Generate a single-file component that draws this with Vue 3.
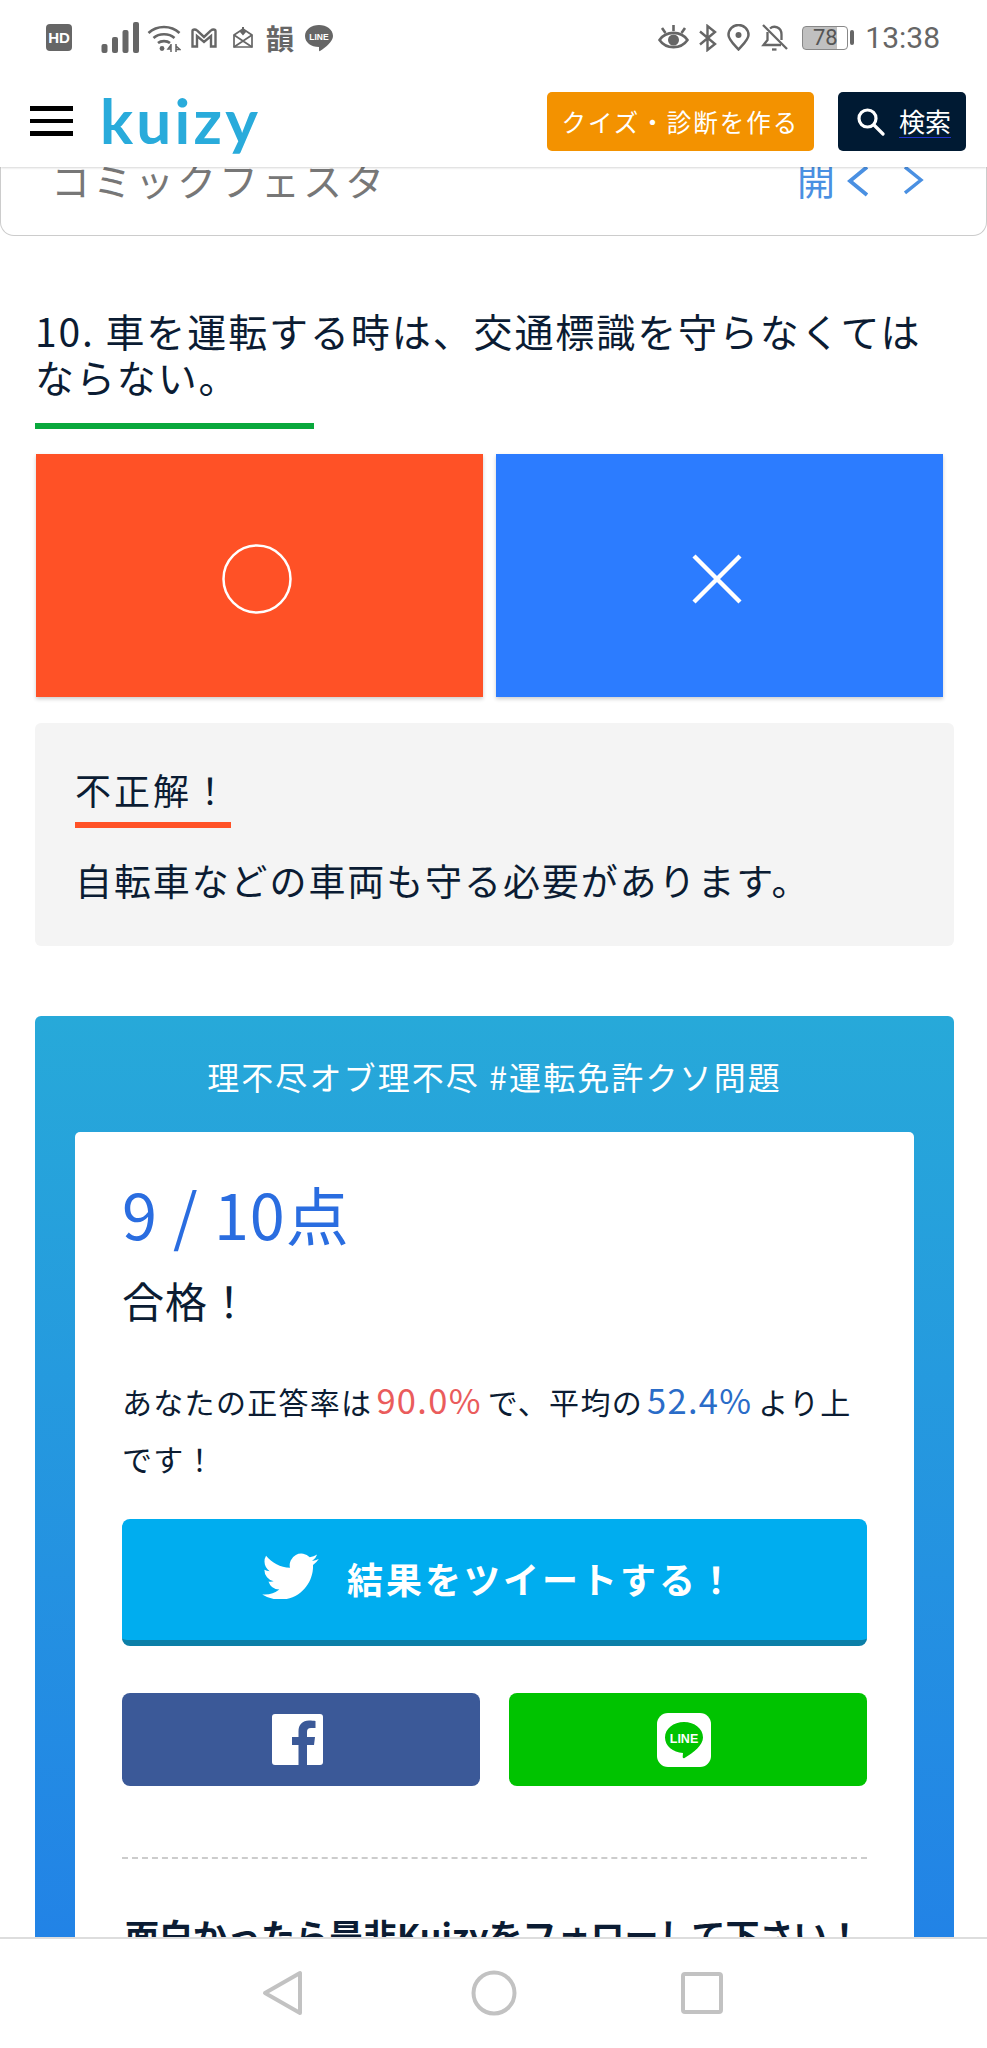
<template>
	<div class="phone">
		<!-- ステータスバー -->
		<div class="status">
			<div class="status-left">
				<span class="hd">HD</span>
				<svg class="st-signal" width="38" height="31" viewBox="0 0 38 31" fill="#666">
					<rect x="0.5" y="22" width="6" height="9" rx="2" />
					<rect x="11" y="15" width="6" height="16" rx="2" />
					<rect x="21.5" y="8" width="6" height="23" rx="2" />
					<rect x="32" y="0" width="6" height="31" rx="2" />
				</svg>
				<svg class="st-wifi" width="34" height="28" viewBox="0 0 34 28" fill="none" stroke="#666" stroke-width="2.6">
					<path d="M1.5 9 C10 1 24 1 32.5 9" />
					<path d="M6.5 14 C12 9 22 9 27.5 14" />
					<path d="M11 19 C14 16.5 20 16.5 23 19" />
					<circle cx="15" cy="24.5" r="2.4" fill="#666" stroke="none" />
					<path d="M24 21 L21 25 L24 25 M24 20 V28 M29 20 V28 M29 22 L33 25.500 H29" stroke-width="1.5" />
				</svg>
				<svg class="st-m" width="26" height="20" viewBox="0 0 26 20" fill="none" stroke="#666" stroke-width="2.4">
					<path d="M1.500 18.500 V3 Q1.500 1.500 3.500 1.500 Q5 1.500 6 2.500 L13 9 L20 2.500 Q21 1.500 22.500 1.500 Q24.500 1.500 24.500 3 V18.500 H20 V8 L13 14 L6 8 V18.500 Z" />
				</svg>
				<svg class="st-mail" width="22" height="22" viewBox="0 0 22 22" fill="none" stroke="#666" stroke-width="1.700">
					<path d="M2 8 L11 2 L20 8 V20 H2 Z" />
					<path d="M2 8 L20 20 M20 8 L2 20" />
					<path d="M11 0 V6 M8.500 4 L11 7 L13.500 4" stroke-width="2" />
				</svg>
				<span class="st-kanji">韻</span>
				<svg class="st-line" width="28" height="28" viewBox="0 0 28 28">
					<path d="M14 1 C21.500 1 28 5.500 28 12 C28 17.500 21 23 15 27 C14.500 27.500 14 27 14 26 V23 C6 23 0 18.500 0 12 C0 5.500 6.500 1 14 1 Z" fill="#666" />
					<text x="14" y="15.500" text-anchor="middle" font-size="8.500" font-weight="700" fill="#fff" font-family="Liberation Sans, sans-serif">LINE</text>
				</svg>
			</div>
			<div class="status-right">
				<svg class="st-eye" width="31" height="27" viewBox="0 0 31 27" fill="none" stroke="#666" stroke-width="2.600">
					<path d="M1.500 16 C8 6.500 23 6.500 29.500 16 C23 25.500 8 25.500 1.500 16 Z" />
					<circle cx="15.500" cy="16" r="5.500" fill="#666" stroke="none" />
					<path d="M15.500 1 V7 M4 4 L7.500 9 M27 4 L23.500 9" />
				</svg>
				<svg class="st-bt" width="20" height="28" viewBox="0 0 20 28" fill="none" stroke="#666" stroke-width="2.400">
					<path d="M2 7.500 L17 20 L9.500 26 V2 L17 8 L2 20.500" />
				</svg>
				<svg class="st-pin" width="23" height="27" viewBox="0 0 23 27" fill="none" stroke="#666" stroke-width="2.500">
					<path d="M11.500 25.500 C6 19.500 1.500 15.500 1.500 11 A10 10 0 0 1 21.500 11 C21.500 15.500 17 19.500 11.500 25.500 Z" />
					<circle cx="11.500" cy="11" r="3" fill="#666" stroke="none" />
				</svg>
				<svg class="st-bell" width="27" height="28" viewBox="0 0 27 28" fill="none" stroke="#666" stroke-width="2.300">
					<path d="M2 1 L26 25" />
					<path d="M6.500 8 V16 L2.500 21 H20" />
					<path d="M9 4.500 C13 1 20.500 3 20.500 10.500 V16" />
					<path d="M11 25.500 H15.500" />
				</svg>
				<div class="battery"><span>{{ battery }}</span></div>
				<span class="battery-nub"></span>
				<span class="time">13:38</span>
			</div>
		</div>

		<!-- ヘッダー -->
		<header class="header">
			<div class="burger"><i></i><i></i><i></i></div>
			<span class="logo">kuizy</span>
			<a class="btn-make">クイズ・診断を作る</a>
			<a class="btn-search">
				<svg width="29" height="29" viewBox="0 0 29 29" fill="none" stroke="#fff" stroke-width="3.200">
					<circle cx="11.500" cy="11.500" r="8.500" />
					<path d="M18 18 L27 27" stroke-linecap="round" />
				</svg>
				<span>検索</span>
			</a>
		</header>

		<!-- スクロール領域 -->
		<main class="content">
			<div class="toc">
				<span class="toc-title">コミックフェスタ</span>
				<span class="toc-open">開</span>
				<svg width="22" height="30" viewBox="0 0 22 30" fill="none" stroke="#4a90e2" stroke-width="3.800"><path d="M21 0 L4 14 L21 28" /></svg>
				<svg class="toc-next" width="20" height="30" viewBox="0 0 20 30" fill="none" stroke="#4a90e2" stroke-width="3.400"><path d="M1 0 L17 13 L1 26" /></svg>
			</div>

			<section class="question">
				<h2 class="q-title">10. 車を運転する時は、交通標識を守らなくてはならない。</h2>
				<div class="q-bar"></div>
				<div class="answers">
					<button class="answer red">
						<svg width="70" height="70" viewBox="0 0 70 70" fill="none" stroke="#fff" stroke-width="2.500"><circle cx="35" cy="35" r="33.500" /></svg>
					</button>
					<button class="answer blue">
						<svg width="50" height="50" viewBox="0 0 50 50" fill="none" stroke="#fff" stroke-width="4.400"><path d="M2 2 L48 48 M48 2 L2 48" /></svg>
					</button>
				</div>
				<div class="feedback">
					<div class="fb-head"><span>不正解！</span></div>
					<p class="fb-text">自転車などの車両も守る必要があります。</p>
				</div>
			</section>

			<section class="result">
				<p class="r-title">理不尽オブ理不尽 #運転免許クソ問題</p>
				<div class="r-card">
					<p class="score">9 / 10点</p>
					<p class="pass">合格！</p>
					<p class="rate">あなたの正答率は<em class="own">90.0%</em>で、平均の<em class="avg">52.4%</em>より上です！</p>
					<a class="tweet">
						<svg width="57" height="46" viewBox="0 0 24 19.500" fill="#fff">
							<path d="M23.953 2.57a10 10 0 01-2.825.775 4.958 4.958 0 002.163-2.723c-.951.555-2.005.959-3.127 1.184a4.92 4.92 0 00-8.384 4.482C7.69 6.095 4.067 4.13 1.64 1.162a4.822 4.822 0 00-.666 2.475c0 1.71.87 3.213 2.188 4.096a4.904 4.904 0 01-2.228-.616v.06a4.923 4.923 0 003.946 4.827 4.996 4.996 0 01-2.212.085 4.936 4.936 0 004.604 3.417 9.867 9.867 0 01-6.102 2.105c-.39 0-.779-.023-1.17-.067a13.995 13.995 0 007.557 2.209c9.053 0 13.998-7.496 13.998-13.985 0-.21 0-.42-.015-.63A9.935 9.935 0 0024 2.590z" />
						</svg>
						<span>結果をツイートする！</span>
					</a>
					<div class="share">
						<a class="share-btn fb">
							<svg width="51" height="51" viewBox="0 0 51 51">
								<rect width="51" height="51" rx="3" fill="#fff" />
								<path d="M35 51 V31 H42 L43 23 H35 V18 C35 15.500 36 14 39 14 H43.500 V7 C42 6.800 39.500 6.500 37 6.500 C30.500 6.500 26.500 10.500 26.500 17.500 V23 H20 V31 H26.500 V51 Z" fill="#3b5998" />
							</svg>
						</a>
						<a class="share-btn line">
							<svg width="54" height="54" viewBox="0 0 54 54">
								<rect width="54" height="54" rx="11" fill="#fff" />
								<path d="M27 9 C37.500 9 46 15.500 46 24.500 C46 32 37 39.500 27.500 45 C26.500 45.500 25.500 45 25.700 43.500 L26 40 C16 39.500 8 33 8 24.500 C8 15.500 16.500 9 27 9 Z" fill="#00c300" />
								<text x="27" y="30" text-anchor="middle" font-size="12.500" font-weight="700" fill="#fff" font-family="Liberation Sans, sans-serif">LINE</text>
							</svg>
						</a>
					</div>
					<div class="dashed"></div>
					<p class="follow">面白かったら是非Kuizyをフォローして下さい！</p>
				</div>
			</section>
		</main>

		<!-- ナビゲーションバー -->
		<nav class="navbar">
			<svg width="42" height="46" viewBox="0 0 42 46" fill="none" stroke="#c2c2c2" stroke-width="4" stroke-linejoin="round"><path d="M38 3 V43 L3 23 Z" /></svg>
			<svg width="46" height="46" viewBox="0 0 46 46" fill="none" stroke="#c2c2c2" stroke-width="4"><circle cx="23" cy="23" r="20.500" /></svg>
			<svg class="nav-square" width="42" height="42" viewBox="0 0 42 42" fill="none" stroke="#c2c2c2" stroke-width="4" stroke-linejoin="round"><rect x="2" y="2" width="38" height="38" rx="2" /></svg>
		</nav>
	</div>
</template>

<script setup>
const battery = 78
</script>

<style>
html, body {
	margin: 0;
	background: #fff;
}
</style>

<style scoped>
.phone {
	width: 987px;
	height: 2048px;
	display: flex;
	flex-direction: column;
	overflow: hidden;
	background: #fff;
	color: #0b1c33;
	font-family: "Noto Sans CJK JP", "Noto Sans", sans-serif;
}

/* ステータスバー */
.status {
	height: 75px;
	flex: none;
	display: flex;
	justify-content: space-between;
	align-items: center;
	padding: 0 47px 0 46px;
}
.status-left, .status-right {
	display: flex;
	align-items: center;
	height: 40px;
}
.hd {
	width: 26px;
	height: 27px;
	border-radius: 4px;
	background: #666;
	color: #fff;
	font: 700 15px/27px "Liberation Sans", sans-serif;
	text-align: center;
}
.st-signal { margin-left: 29px; }
.st-wifi { margin-left: 8px; }
.st-m { margin-left: 10px; }
.st-mail { margin-left: 15px; }
.st-kanji {
	margin-left: 12px;
	color: #666;
	font-size: 28px;
	line-height: 30px;
	font-weight: 700;
}
.st-line { margin-left: 11px; }
.st-eye { margin-right: 9px; }
.st-bt { margin-right: 9px; }
.st-pin { margin-right: 11px; }
.st-bell { margin-right: 14px; }
.battery {
	width: 46px;
	height: 24px;
	box-sizing: border-box;
	border: 1.5px solid #888;
	border-radius: 4px;
	background: linear-gradient(90deg, #c0c0c0 78%, #fff 78%);
	color: #555;
	font: 22px/21px Roboto, sans-serif;
	text-align: center;
}
.battery-nub {
	width: 4px;
	height: 15px;
	margin-left: 2px;
	border-radius: 2px;
	background: #666;
}
.time {
	margin-left: 11px;
	color: #666;
	font: 30px/40px Roboto, sans-serif;
}

/* ヘッダー */
.header {
	position: relative;
	z-index: 2;
	height: 92px;
	flex: none;
	display: flex;
	align-items: center;
	padding: 0 21px 0 30px;
	background: #fff;
	box-shadow: 0 2px 2px -1px rgba(0, 0, 0, 0.16);
}
.burger {
	width: 43px;
	display: flex;
	flex-direction: column;
	gap: 8px;
}
.burger i {
	height: 4.500px;
	background: #000;
}
.logo {
	margin-left: 27px;
	margin-top: -2px;
	color: #29abdb;
	font: 700 62px/70px Lato, sans-serif;
	letter-spacing: 3.200px;
}
.btn-make {
	margin-left: auto;
	width: 267px;
	height: 59px;
	border-radius: 5px;
	background: #f39200;
	color: #fff;
	font-size: 24.500px;
	line-height: 59px;
	letter-spacing: 2px;
	text-align: center;
}
.btn-search {
	margin-left: 24px;
	width: 128px;
	height: 59px;
	box-sizing: border-box;
	padding-left: 18px;
	display: flex;
	align-items: center;
	gap: 14px;
	border-radius: 5px;
	background: #001a33;
	color: #fff;
	font-size: 26px;
}
.btn-search span {
	line-height: 32px;
	border-bottom: 1px solid #2233cc;
}

/* 本文 */
.content {
	flex: 1;
	min-height: 0;
	overflow: hidden;
}
.toc {
	height: 69px;
	box-sizing: border-box;
	display: flex;
	align-items: flex-start;
	padding: 0 62px 0 50px;
	overflow: hidden;
	border: 1.500px solid #ccc;
	border-top: 0;
	border-radius: 0 0 14px 14px;
}
.toc-title {
	margin-top: -12px;
	color: #777;
	font-size: 39px;
	line-height: 48px;
	letter-spacing: 3px;
}
.toc-open {
	margin-left: auto;
	margin-top: -12px;
	color: #4a90e2;
	font-size: 38px;
	line-height: 48px;
}
.toc svg {
	margin-left: 11px;
}
.toc svg.toc-next {
	margin-left: 36px;
}

.question {
	padding: 0 33px 0 35px;
}
.q-title {
	margin: 71px 0 0;
	font-size: 39px;
	line-height: 46px;
	font-weight: 400;
	letter-spacing: 1.900px;
	padding-right: 20px;
}
.q-bar {
	width: 279px;
	height: 6px;
	margin-top: 24px;
	background: #09a83c;
}
.answers {
	display: flex;
	gap: 13px;
	margin-top: 25px;
	padding: 0 11px 0 1px;
}
.answer {
	flex: 1;
	height: 243px;
	padding: 6px 5px 0 0;
	border: 0;
	display: flex;
	align-items: center;
	justify-content: center;
	box-shadow: 0 2px 4px rgba(0, 0, 0, 0.2);
}
.answer.red { background: #ff5126; }
.answer.blue { background: #2c7cff; }
.feedback {
	margin-top: 26px;
	height: 223px;
	box-sizing: border-box;
	padding: 40px 40px 0;
	border-radius: 6px;
	background: #f4f4f4;
}
.fb-head span {
	display: inline-block;
	border-bottom: 6px solid #ff5126;
	padding-bottom: 7px;
	font-size: 36px;
	line-height: 52px;
	letter-spacing: 3px;
}
.fb-text {
	margin: 26px 0 0;
	font-size: 37px;
	line-height: 52px;
	letter-spacing: 1.900px;
}

.result {
	margin: 70px 33px 0 35px;
	padding: 0 40px;
	border-radius: 6px 6px 0 0;
	background: linear-gradient(180deg, #27a9d9 0, #2283e6 920px);
}
.r-title {
	margin: 0;
	height: 116px;
	color: #fff;
	font-size: 32px;
	line-height: 120px;
	letter-spacing: 2.100px;
	text-align: center;
}
.r-card {
	padding: 36px 47px 60px;
	border-radius: 5px 5px 0 0;
	background: #fff;
}
.score {
	margin: 0;
	color: #2a6de0;
	font-size: 63px;
	line-height: 90px;
	letter-spacing: 1px;
}
.pass {
	margin: 12px 0 0;
	font-size: 42px;
	line-height: 60px;
	letter-spacing: 1px;
}
.rate {
	margin: 41px 0 0;
	font-size: 30px;
	line-height: 57px;
	letter-spacing: 1.300px;
}
.rate em {
	margin: 0 6px 0 4px;
	font-style: normal;
	font-size: 34.500px;
}
.own { color: #ea5c5c; }
.avg { color: #2a6cc8; }
.tweet {
	margin-top: 32px;
	height: 127px;
	box-sizing: border-box;
	display: flex;
	align-items: center;
	justify-content: center;
	gap: 28px;
	padding: 0 0 3px 10px;
	border-radius: 8px;
	border-bottom: 6px solid #0b7fa8;
	background: #00adef;
	color: #fff;
	font-size: 36px;
	font-weight: 700;
	letter-spacing: 3px;
}
.tweet svg {
	margin-top: -5px;
}
.share {
	display: flex;
	gap: 29px;
	margin-top: 47px;
}
.share-btn {
	flex: 1;
	height: 93px;
	box-sizing: border-box;
	padding-right: 8px;
	display: flex;
	align-items: center;
	justify-content: center;
	border-radius: 8px;
}
.share-btn.fb { background: #3b5998; }
.share-btn.line { background: #00c300; }
.dashed {
	margin-top: 71px;
	border-top: 2px dashed #ccc;
}
.follow {
	margin: 50px 0 0 3px;
	font-size: 34px;
	font-weight: 700;
	line-height: 52px;
	white-space: nowrap;
}

/* ナビゲーションバー */
.navbar {
	position: relative;
	z-index: 2;
	height: 111px;
	flex: none;
	box-sizing: border-box;
	display: flex;
	align-items: center;
	padding: 0 0 2px 262px;
	gap: 167px;
	background: #fff;
	border-top: 2px solid #ddd;
}
.navbar .nav-square {
	margin-left: -3px;
}
</style>
